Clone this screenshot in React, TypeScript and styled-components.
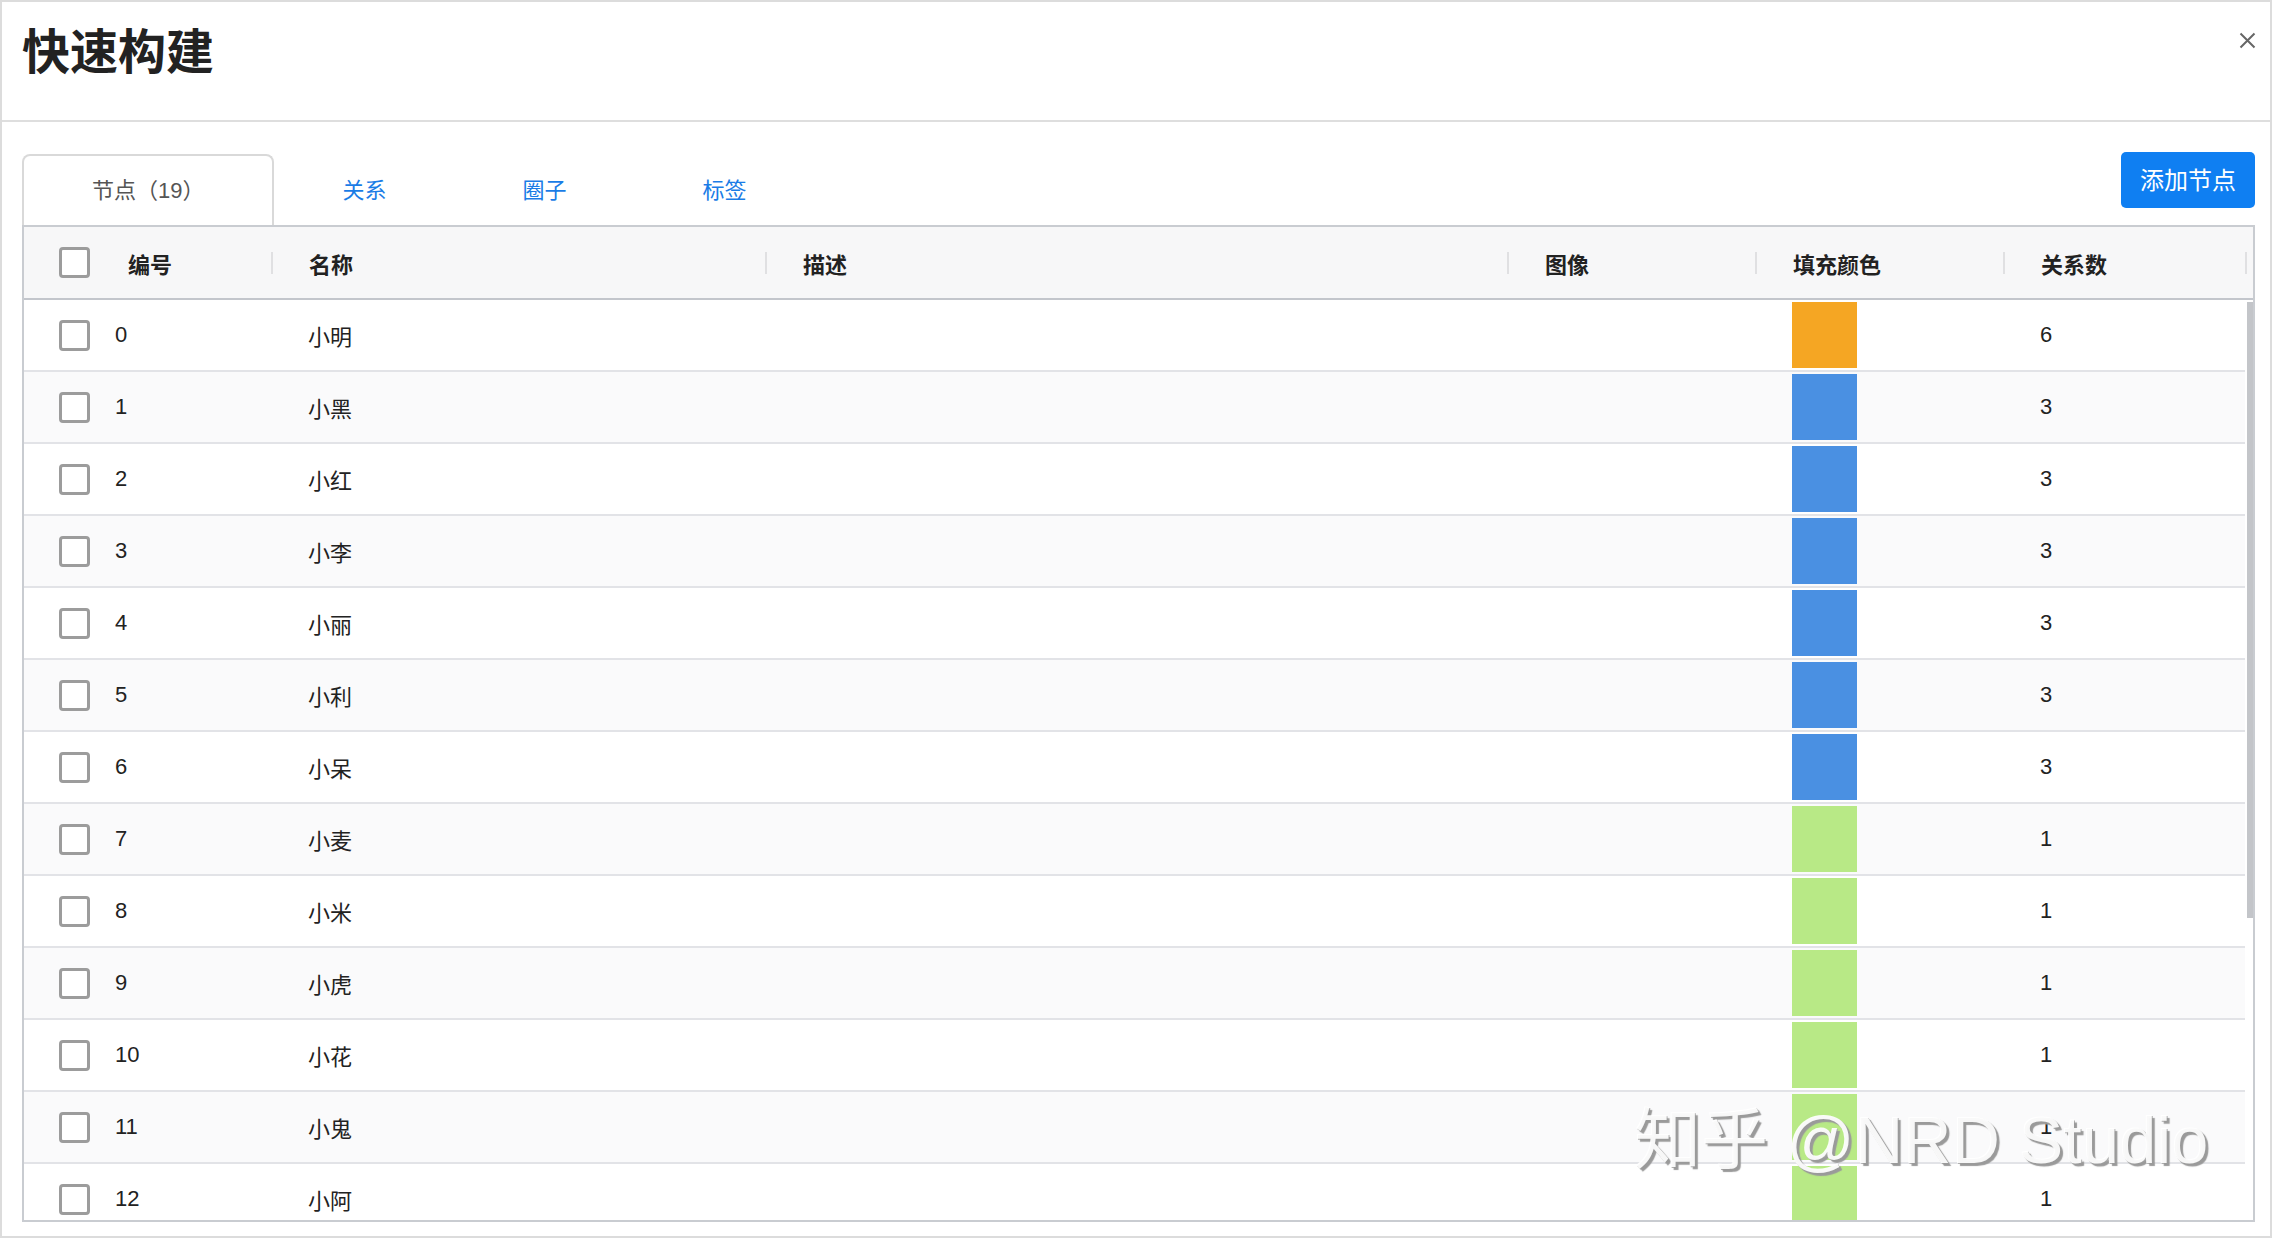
import styled, { createGlobalStyle } from "styled-components";

const GREEN = "#b8e986";
const BLUE = "#4a90e2";
const ORANGE = "#f5a623";

const nodes = [
  { id: 0, name: "小明", color: ORANGE, count: 6 },
  { id: 1, name: "小黑", color: BLUE, count: 3 },
  { id: 2, name: "小红", color: BLUE, count: 3 },
  { id: 3, name: "小李", color: BLUE, count: 3 },
  { id: 4, name: "小丽", color: BLUE, count: 3 },
  { id: 5, name: "小利", color: BLUE, count: 3 },
  { id: 6, name: "小呆", color: BLUE, count: 3 },
  { id: 7, name: "小麦", color: GREEN, count: 1 },
  { id: 8, name: "小米", color: GREEN, count: 1 },
  { id: 9, name: "小虎", color: GREEN, count: 1 },
  { id: 10, name: "小花", color: GREEN, count: 1 },
  { id: 11, name: "小鬼", color: GREEN, count: 1 },
  { id: 12, name: "小阿", color: GREEN, count: 1 },
  { id: 13, name: "小强", color: GREEN, count: 1 },
  { id: 14, name: "小刚", color: GREEN, count: 1 },
  { id: 15, name: "小美", color: GREEN, count: 1 },
  { id: 16, name: "小芳", color: GREEN, count: 1 },
  { id: 17, name: "小杰", color: GREEN, count: 1 },
  { id: 18, name: "小雨", color: GREEN, count: 1 },
];

const tabs = ["关系", "圈子", "标签"];
const columns = ["名称", "描述", "图像", "填充颜色", "关系数"];

// visible part of the list vs. the whole list, for the scroll thumb
const ROW_HEIGHT = 72;
const VIEW_HEIGHT = 918;

const App = () => {
  const thumb = Math.round((VIEW_HEIGHT / (nodes.length * ROW_HEIGHT)) * VIEW_HEIGHT);

  return (
    <Modal>
      <GlobalStyle />
      <Header>
        <Title>快速构建</Title>
        <Close aria-label="close">
          <svg width="17" height="17" viewBox="0 0 17 17">
            <path d="M1.5 1.5 L15.5 15.5 M15.5 1.5 L1.5 15.5" stroke="#666" strokeWidth="2" />
          </svg>
        </Close>
      </Header>
      <Body>
        <TabBar>
          <Tab $active>节点（19）</Tab>
          {tabs.map((t) => (
            <Tab key={t}>{t}</Tab>
          ))}
          <AddButton>添加节点</AddButton>
        </TabBar>
        <Table>
          <HeadRow>
            <HeadCell>
              <Checkbox />
              <HeadLabel>编号</HeadLabel>
            </HeadCell>
            {columns.map((c) => (
              <HeadCell key={c} $divider>
                {c}
              </HeadCell>
            ))}
            <HeadCell $divider />
          </HeadRow>
          <RowsWrap>
            <Rows>
              {nodes.map((n) => (
                <Row key={n.id} $odd={n.id % 2 === 1}>
                  <Cell>
                    <Checkbox />
                    <Num>{n.id}</Num>
                  </Cell>
                  <Cell>{n.name}</Cell>
                  <Cell />
                  <Cell />
                  <Cell>
                    <Swatch $color={n.color} />
                  </Cell>
                  <Cell>{n.count}</Cell>
                </Row>
              ))}
            </Rows>
            <ScrollThumb style={{ height: thumb }} />
          </RowsWrap>
        </Table>
      </Body>
      <Watermark>知乎 @NRD Studio</Watermark>
    </Modal>
  );
};

const GlobalStyle = createGlobalStyle`
  html, body {
    margin: 0;
    padding: 0;
    background: #fff;
  }
  body {
    font-family: "Liberation Sans", "Noto Sans CJK SC", sans-serif;
    color: #222;
  }
`;

const Modal = styled.div`
  position: relative;
  width: 2272px;
  height: 1238px;
  box-sizing: border-box;
  border: 2px solid #dcdcdc;
  background: #fff;
  display: flex;
  flex-direction: column;
  overflow: hidden;
`;

const Header = styled.header`
  height: 120px;
  flex-shrink: 0;
  box-sizing: border-box;
  border-bottom: 2px solid #dedede;
  display: flex;
  justify-content: space-between;
  align-items: flex-start;
  padding: 22px 13px 0 20px;
`;

const Title = styled.h1`
  margin: 0;
  font-size: 48px;
  line-height: 58px;
  font-weight: 700;
  color: #222;
`;

const Close = styled.button`
  margin-top: 6px;
  padding: 0;
  border: none;
  background: none;
  width: 20px;
  height: 20px;
  display: flex;
  align-items: center;
  justify-content: center;
  cursor: pointer;
`;

const Body = styled.div`
  flex: 1;
  min-height: 0;
  display: flex;
  flex-direction: column;
  padding: 32px 15px 14px 20px;
`;

const TabBar = styled.div`
  display: flex;
  align-items: flex-start;
  height: 71px;
  flex-shrink: 0;
`;

const Tab = styled.div<{ $active?: boolean }>`
  height: 71px;
  box-sizing: border-box;
  padding: 0 ${(p) => (p.$active ? "68px" : "66px")} 6px;
  display: flex;
  align-items: center;
  font-size: 22px;
  color: ${(p) => (p.$active ? "#555" : "#1a7ce6")};
  border: 2px solid ${(p) => (p.$active ? "#d9d9d9" : "transparent")};
  border-bottom: none;
  border-radius: 8px 8px 0 0;
  cursor: pointer;
`;

const AddButton = styled.button`
  margin-left: auto;
  margin-top: -2px;
  height: 56px;
  padding: 0 19px 3px;
  border: none;
  border-radius: 5px;
  background: #0f7ff2;
  color: #fff;
  font-family: inherit;
  font-size: 24px;
  cursor: pointer;
`;

const Table = styled.div`
  flex: 1;
  min-height: 0;
  display: flex;
  flex-direction: column;
  border: 2px solid #c9ccd1;
  overflow: hidden;
`;

const HeadRow = styled.div`
  display: grid;
  grid-template-columns: 247px 494px 742px 248px 248px 242px 1fr;
  height: 73px;
  flex-shrink: 0;
  box-sizing: border-box;
  background: #f7f7f8;
  border-bottom: 2px solid #c3c6cc;
`;

const HeadCell = styled.div<{ $divider?: boolean }>`
  position: relative;
  display: flex;
  align-items: center;
  padding-left: ${(p) => (p.$divider ? "38px" : "35px")};
  font-size: 22px;
  font-weight: 700;
  color: #222;
  &::before {
    content: "";
    display: ${(p) => (p.$divider ? "block" : "none")};
    position: absolute;
    left: 0;
    top: 25px;
    width: 2px;
    height: 22px;
    background: #e0e0e2;
  }
`;

const HeadLabel = styled.span`
  margin-left: 38px;
`;

const RowsWrap = styled.div`
  position: relative;
  flex: 1;
  min-height: 0;
  display: flex;
`;

const Rows = styled.div`
  flex: 1;
  min-width: 0;
  overflow-y: hidden;
  padding-right: 8px;
`;

const ScrollThumb = styled.div`
  position: absolute;
  right: 0;
  top: 2px;
  width: 6px;
  background: #c3c5c9;
`;

const Row = styled.div<{ $odd: boolean }>`
  display: grid;
  grid-template-columns: 247px 494px 742px 248px 248px 1fr;
  height: 72px;
  box-sizing: border-box;
  background: ${(p) => (p.$odd ? "#fafafb" : "#fff")};
  border-bottom: 2px solid #e2e3e7;
`;

const Cell = styled.div`
  display: flex;
  align-items: center;
  padding-left: 37px;
  font-size: 22px;
  color: #222;
  &:first-child {
    padding-left: 35px;
  }
`;

const Checkbox = styled.span`
  display: inline-block;
  width: 31px;
  height: 31px;
  box-sizing: border-box;
  border: 3px solid #9c9c9c;
  border-radius: 4px;
  background: #fff;
  flex-shrink: 0;
`;

const Num = styled.span`
  margin-left: 25px;
`;

const Swatch = styled.span<{ $color: string }>`
  display: block;
  width: 65px;
  height: 66px;
  background: ${(p) => p.$color};
`;

const Watermark = styled.div`
  position: absolute;
  left: 1632px;
  top: 1097px;
  font-size: 67px;
  line-height: 82px;
  color: rgba(255, 255, 255, 0.92);
  white-space: nowrap;
  pointer-events: none;
  text-shadow: 3px 3px 1px #9a9a9a, 1px 1px 0 #b0b0b0;
`;

export default App;
